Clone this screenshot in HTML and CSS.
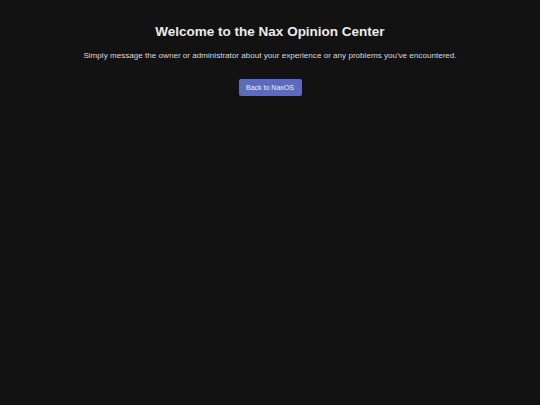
FILE: index.html
```html
<!DOCTYPE html>
<html>
<head>
<meta charset="utf-8">
<link rel="stylesheet" href="styles.css">
</head>
<body>
<main class="page">
  <h1 class="title">Welcome to the Nax Opinion Center</h1>
  <p class="lead">Simply message the owner or administrator about your experience or any problems you've encountered.</p>
  <button class="back">Back to NaxOS</button>
</main>
</body>
</html>
```
FILE: styles.css
```css
html, body {
  margin: 0;
  padding: 0;
  background: #121212;
  height: 100%;
}
body {
  font-family: "Liberation Sans", Arial, sans-serif;
  color: #e0e0e0;
}
.page {
  display: flex;
  flex-direction: column;
  align-items: center;
  padding-top: 24px;
  text-align: center;
}
.title {
  margin: 0;
  font-size: 13.5px;
  font-weight: bold;
  line-height: 16px;
  color: #ececec;
}
.lead {
  margin: 10px 0 0;
  font-size: 8.1px;
  line-height: 11px;
  color: #dadada;
}
.back {
  margin-top: 18px;
  width: 63px;
  height: 17px;
  padding: 0;
  border: none;
  border-radius: 2px;
  background: #5c6bc0;
  color: #f0f0f0;
  font-family: "Liberation Sans", Arial, sans-serif;
  font-size: 7px;
}
```
